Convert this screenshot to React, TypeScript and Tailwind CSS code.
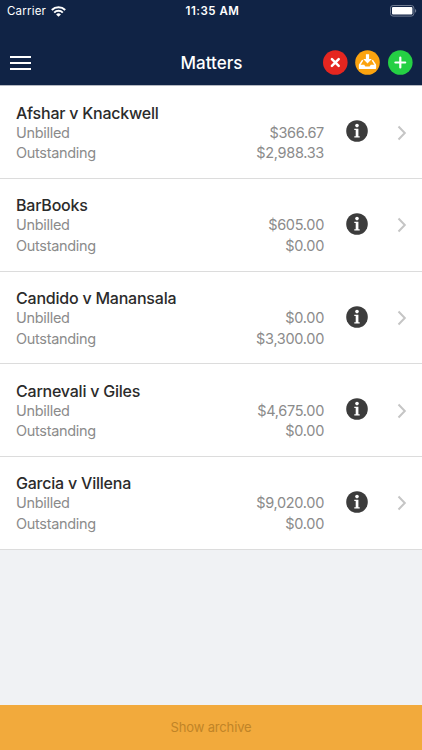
import React from 'react';

interface Matter {
  name: string;
  unbilled: string;
  outstanding: string;
}

const MATTERS: Matter[] = [
  { name: 'Afshar v Knackwell', unbilled: '$366.67', outstanding: '$2,988.33' },
  { name: 'BarBooks', unbilled: '$605.00', outstanding: '$0.00' },
  { name: 'Candido v Manansala', unbilled: '$0.00', outstanding: '$3,300.00' },
  { name: 'Carnevali v Giles', unbilled: '$4,675.00', outstanding: '$0.00' },
  { name: 'Garcia v Villena', unbilled: '$9,020.00', outstanding: '$0.00' },
];

function WifiIcon() {
  return (
    <svg width="15" height="11" viewBox="0 0 15 11" fill="none" stroke="#fff" strokeWidth="2">
      <path d="M0.8 4a9.6 9.6 0 0 1 13.4 0" />
      <path d="M3.2 6.6a6.1 6.1 0 0 1 8.6 0" />
      <path d="M7.5 10.8 5.1 8.4a3.4 3.4 0 0 1 4.8 0Z" fill="#fff" stroke="none" />
    </svg>
  );
}

function BatteryIcon() {
  return (
    <svg width="28" height="12" viewBox="0 0 28 12">
      <rect x="0.5" y="0.5" width="23.4" height="10.6" rx="2.6" fill="none" stroke="#6f7b91" />
      <rect x="2" y="2" width="20.4" height="7.6" rx="1" fill="#fff" />
      <path d="M25 3.9c1.7.5 1.7 3.3 0 3.8Z" fill="#6f7b91" />
    </svg>
  );
}

function CloseIcon() {
  return (
    <svg width="25" height="25" viewBox="0 0 25 25">
      <circle cx="12.3" cy="12.5" r="12.3" fill="#e52620" />
      <path d="m8.9 9.1 6.8 6.8m0-6.8-6.8 6.8" stroke="#fff" strokeWidth="2.5" strokeLinecap="round" />
    </svg>
  );
}

function DownloadIcon() {
  return (
    <svg width="25" height="25" viewBox="0 0 25 25">
      <circle cx="12.5" cy="12.5" r="12.3" fill="#fba30f" />
      <path
        d="M7.7 10.2 4.6 15v3.2h15.8V15l-3.1-4.8"
        fill="none"
        stroke="#fff"
        strokeWidth="1.5"
        strokeLinejoin="round"
      />
      <path d="M4.6 14.7h4.6l1.2 1.7h4.2l1.2-1.7h4.6v3.7H4.6Z" fill="#fff" />
      <path d="M10.9 4.3h3.2v4.6h2.7l-4.3 4.7-4.3-4.7h2.7Z" fill="#fff" />
    </svg>
  );
}

function AddIcon() {
  return (
    <svg width="25" height="25" viewBox="0 0 25 25">
      <circle cx="12.3" cy="12.5" r="12.3" fill="#25d044" />
      <path d="M12.3 7.6v9.8M7.4 12.5h9.8" stroke="#fff" strokeWidth="2.2" strokeLinecap="round" />
    </svg>
  );
}

function InfoIcon() {
  return (
    <svg width="22" height="22" viewBox="0 0 22 22">
      <circle cx="11" cy="11" r="10.8" fill="#3c3c3c" />
      <circle cx="11" cy="5.6" r="1.8" fill="#fff" />
      <path d="M8.3 8.8h4.1v7.5h1.3v1.1H8.3v-1.1h1.4V9.9H8.3Z" fill="#fff" />
    </svg>
  );
}

function ChevronIcon() {
  return (
    <svg width="10" height="16" viewBox="0 0 10 16" fill="none" stroke="#c5c5c5" strokeWidth="2">
      <path d="m1.5 1.5 6.3 6.5-6.3 6.5" />
    </svg>
  );
}

function StatusBar() {
  return (
    <div className="grid h-[22px] grid-cols-[1fr_auto_1fr] items-center pl-[7px] pr-[4px] text-[11.5px] leading-[20px]">
      <div className="flex items-center gap-[5px]">
        <span className="tracking-[0.2px]">Carrier</span>
        <WifiIcon />
      </div>
      <span className="font-semibold tracking-[0.5px]">11:35 AM</span>
      <div className="flex justify-end">
        <BatteryIcon />
      </div>
    </div>
  );
}

function MatterRow({ matter }: { matter: Matter }) {
  return (
    <li className="flex h-[92.67px] items-start border-b border-[#dcdcdc] bg-white pl-[16px] pr-[15px] pt-[16.4px]">
      <div className="flex-1">
        <h2 className="text-[16px] font-medium leading-[20px] tracking-[-0.22px] text-[#2b2b2b]">{matter.name}</h2>
        <div className="flex justify-between text-[14.5px] leading-[20.4px] tracking-[-0.31px] text-[#8b8b8b]">
          <span>Unbilled</span>
          <span>{matter.unbilled}</span>
        </div>
        <div className="flex justify-between text-[14.5px] leading-[20.4px] tracking-[-0.31px] text-[#8b8b8b]">
          <span>Outstanding</span>
          <span>{matter.outstanding}</span>
        </div>
      </div>
      <div className="ml-[22px] mt-[17.7px]">
        <InfoIcon />
      </div>
      <div className="ml-[29px] mt-[21.8px]">
        <ChevronIcon />
      </div>
    </li>
  );
}

export default function App() {
  return (
    <div className="flex h-[750px] w-[422px] flex-col bg-[#f0f2f4] font-['Inter',sans-serif]">
      <header className="h-[86.4px] border-b border-[#b5b9c2] bg-[#102345] text-white">
        <StatusBar />
        <div className="grid h-[63px] grid-cols-[1fr_auto_1fr] items-center pl-[10px] pr-[9px] pt-[18px]">
          <div className="flex w-[21px] flex-col gap-[4px]">
            <span className="h-[2px] bg-white" />
            <span className="h-[2px] bg-white" />
            <span className="h-[2px] bg-white" />
          </div>
          <h1 className="text-[17px] font-medium leading-[22px]">Matters</h1>
          <div className="flex justify-end">
            <CloseIcon />
            <div className="ml-[7px] mr-[8px]">
              <DownloadIcon />
            </div>
            <AddIcon />
          </div>
        </div>
      </header>

      <ul className="flex-1">
        {MATTERS.map((matter) => (
          <MatterRow key={matter.name} matter={matter} />
        ))}
      </ul>

      <button className="h-[45px] bg-[#f2aa3c] text-[13px] tracking-[-0.15px] text-[#c08427]">Show archive</button>
    </div>
  );
}
